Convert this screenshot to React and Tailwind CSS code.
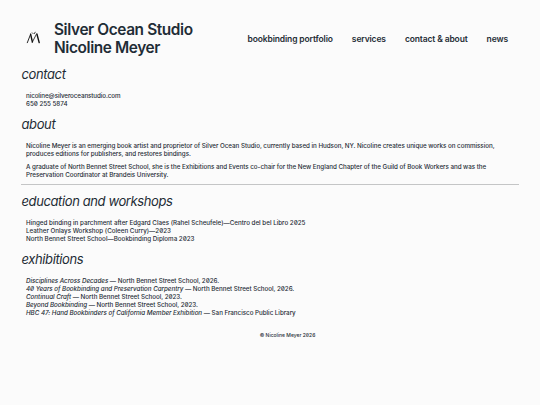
const nav = ["bookbinding portfolio", "services", "contact & about", "news"];

const education = [
  "Hinged binding in parchment after Edgard Claes (Rahel Scheufele)—Centro del bel Libro 2025",
  "Leather Onlays Workshop (Coleen Curry)—2023",
  "North Bennet Street School—Bookbinding Diploma 2023",
];

const exhibitions = [
  { title: "Disciplines Across Decades", venue: "North Bennet Street School, 2026." },
  { title: "40 Years of Bookbinding and Preservation Carpentry", venue: "North Bennet Street School, 2026." },
  { title: "Continual Craft", venue: "North Bennet Street School, 2023." },
  { title: "Beyond Bookbinding", venue: "North Bennet Street School, 2023." },
  { title: "HBC 47: Hand Bookbinders of California Member Exhibition", venue: "San Francisco Public Library" },
];

function Logo() {
  return (
    <svg className="w-[15px] h-[14px]" viewBox="0 0 15 14" fill="none" stroke="#111" strokeLinecap="round">
      <path strokeWidth="0.9" d="M1.3 11.7 4.6 3.2" />
      <path strokeWidth="1.4" d="M4.6 3.2 6.4 11" />
      <path strokeWidth="0.8" d="M6.4 11 10.3 3.4M6.3 1.8l.8.8M9.2 1.2 8.4 2.6" />
      <path strokeWidth="1.4" d="M10.9 3 13.2 11.6" />
    </svg>
  );
}

function Heading({ children }) {
  return <h2 className="h-5 pl-[0.5px] text-[13px] leading-5 italic tracking-[-0.39px]">{children}</h2>;
}

export default function App() {
  return (
    <div className="min-h-screen bg-[#fbfbfb] text-[#1f2d36] font-['Inter',sans-serif] whitespace-nowrap pt-[21px] pl-[21px] pr-[21px]">
      <header className="h-9 flex items-center">
        <div className="w-[33px] pl-[5px] pb-[2px]">
          <Logo />
        </div>
        <h1 className="text-[15.4px] leading-[18px] font-semibold tracking-[-0.39px]">
          Silver Ocean Studio
          <br />
          Nicoline Meyer
        </h1>
        <nav className="ml-auto mr-[11px] flex gap-[19px] text-[8.5px] leading-3 font-semibold tracking-[-0.13px]">
          {nav.map((item) => (
            <a key={item} href="#">
              {item}
            </a>
          ))}
        </nav>
      </header>

      <main className="pt-[7px] text-[6.25px] leading-[8px] font-medium tracking-[-0.03px] [font-feature-settings:'zero']">
        <div className="font-normal">
          <Heading>contact</Heading>
        </div>
        <div className="pl-[5px] pt-[8px] pb-[6px]">
          <p className="tracking-[-0.09px]">nicoline@silveroceanstudio.com</p>
          <p>650 255 5874</p>
        </div>

        <div className="font-normal">
          <Heading>about</Heading>
        </div>
        <div className="pl-[5px] pt-[8px] pb-[5px] flex flex-col gap-[5px]">
          <p>
            Nicoline Meyer is an emerging book artist and proprietor of Silver Ocean Studio, currently based in Hudson, NY. Nicoline creates unique works on commission,
            <br />
            produces editions for publishers, and restores bindings.
          </p>
          <p>
            A graduate of North Bennet Street School, she is the Exhibitions and Events co-chair for the New England Chapter of the Guild of Book Workers and was the
            <br />
            Preservation Coordinator at Brandeis University.
          </p>
        </div>
        <hr className="border-[#c4c5c6]" />

        <div className="pt-[6px] font-normal">
          <Heading>education and workshops</Heading>
        </div>
        <div className="pl-[5px] pt-[8px] pb-[6px] tracking-normal">
          {education.map((line) => (
            <p key={line}>{line}</p>
          ))}
        </div>

        <div className="font-normal">
          <Heading>exhibitions</Heading>
        </div>
        <div className="pl-[5px] pt-[8px]">
          {exhibitions.map(({ title, venue }) => (
            <p key={title}>
              <em>{title}</em> — {venue}
            </p>
          ))}
        </div>
      </main>

      <footer className="pt-[14px] pl-[35px] text-center text-[5px] leading-[8px] font-medium [font-feature-settings:'zero']">
        © Nicoline Meyer 2026
      </footer>
    </div>
  );
}
